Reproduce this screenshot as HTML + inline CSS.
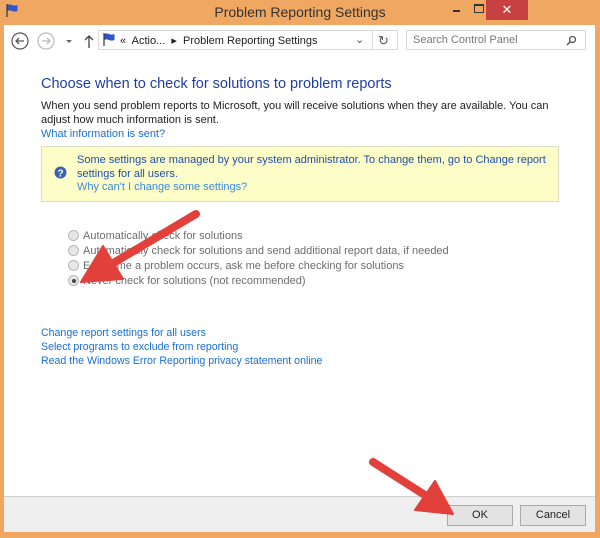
<!DOCTYPE html>
<html><head><style>
*{margin:0;padding:0;box-sizing:border-box}
body{width:600px;height:538px;overflow:hidden;background:#efa762;font-family:"Liberation Sans",sans-serif;position:relative}
.abs{position:absolute}
.t{font-size:11px;color:#1e1e1e;white-space:nowrap}
.l{color:#1a6fd1}
.radio{position:absolute;width:11px;height:11px;border:1px solid #b8b8b8;border-radius:50%;background:#e6e6e6}
</style></head><body>
<div class="abs" style="left:0;top:0;width:600px;height:25px;background:#efa762"></div>
<svg class="abs" style="left:5px;top:3px" width="14" height="14"><path d="M2 1v13" stroke="#333" stroke-width="1.2"/><path d="M2.5 2c3-2 5 2 10 0v6c-5 2-7-2-10 0z" fill="#2f55c8"/></svg>
<div class="abs" style="left:0;top:4px;width:600px;text-align:center;font-size:14px;color:#333">Problem Reporting Settings</div>
<div class="abs" style="left:453px;top:10px;width:7px;height:2px;background:#333"></div>
<div class="abs" style="left:474px;top:4px;width:10px;height:9px;border:1px solid #333;border-top-width:2px"></div>
<div class="abs" style="left:486px;top:0;width:42px;height:20px;background:#c74042;color:#fff;font-size:13px;text-align:center;line-height:20px">✕</div>
<div class="abs" style="left:4px;top:25px;width:591px;height:507px;background:#fff"></div>
<svg class="abs" style="left:10px;top:31px" width="90" height="20"><circle cx="10" cy="10" r="8" fill="none" stroke="#555" stroke-width="1.2"/><path d="M14 10H6M9 7l-3 3 3 3" fill="none" stroke="#555" stroke-width="1.3"/><circle cx="36" cy="10" r="8" fill="none" stroke="#bbb" stroke-width="1.2"/><path d="M32 10h8M37 7l3 3-3 3" fill="none" stroke="#bbb" stroke-width="1.3"/><path d="M56 9l3 3 3-3z" fill="#666"/><path d="M79 17V5M75 9l4-4 4 4" fill="none" stroke="#444" stroke-width="1.3"/></svg>
<div class="abs" style="left:98px;top:30px;width:300px;height:20px;border:1px solid #d9d9d9"></div>
<svg class="abs" style="left:102px;top:32px" width="14" height="14"><path d="M2 1v13" stroke="#333" stroke-width="1.2"/><path d="M2.5 2c3-2 5 2 10 0v6c-5 2-7-2-10 0z" fill="#2f55c8"/></svg>
<div class="abs t" style="left:120px;top:34px">«&nbsp; Actio... &nbsp;▸ &nbsp;Problem Reporting Settings</div>
<div class="abs t" style="left:355px;top:33px;color:#555">⌄</div>
<div class="abs" style="left:372px;top:30px;width:1px;height:20px;background:#d9d9d9"></div>
<div class="abs t" style="left:378px;top:33px;color:#555;font-size:13px">↻</div>
<div class="abs" style="left:406px;top:30px;width:180px;height:20px;border:1px solid #d9d9d9"></div>
<div class="abs t" style="left:413px;top:34px;color:#777">Search Control Panel</div>
<svg class="abs" style="left:566px;top:35px" width="11" height="11"><circle cx="6.5" cy="4.5" r="3" fill="none" stroke="#555" stroke-width="1.3"/><path d="M4.5 6.5L1 10" stroke="#555" stroke-width="1.5"/></svg>
<div class="abs" style="left:41px;top:76px;font-size:14.5px;color:#1f3f9f;white-space:nowrap">Choose when to check for solutions to problem reports</div>
<div class="abs t" style="left:41px;top:99px;line-height:14px">When you send problem reports to Microsoft, you will receive solutions when they are available. You can<br>adjust how much information is sent.<br><span class="l">What information is sent?</span></div>
<div class="abs" style="left:41px;top:146px;width:518px;height:56px;background:#fdfdc8;border:1px solid #dcdcc0"></div>
<svg class="abs" style="left:54px;top:166px" width="13" height="13"><circle cx="6.5" cy="6.5" r="6" fill="#3a63b0"/><text x="6.5" y="10.5" font-size="10" font-weight="bold" fill="#fff" text-anchor="middle" font-family="Liberation Sans">?</text></svg>
<div class="abs t" style="left:77px;top:154px;line-height:13.5px;color:#1f4fa8">Some settings are managed by your system administrator. To change them, go to Change report<br>settings for all users.<br><span class="l" style="color:#3a8be0">Why can't I change some settings?</span></div>
<div class="radio" style="left:68px;top:230px"></div>
<div class="radio" style="left:68px;top:245px"></div>
<div class="radio" style="left:68px;top:260px"></div>
<div class="radio" style="left:68px;top:275px"><div style="position:absolute;left:2.5px;top:2.5px;width:4px;height:4px;border-radius:50%;background:#444"></div></div>
<div class="abs t" style="left:83px;top:229px;line-height:15px;color:#6d6d6d">Automatically check for solutions<br>Automatically check for solutions and send additional report data, if needed<br>Each time a problem occurs, ask me before checking for solutions<br>Never check for solutions (not recommended)</div>
<div class="abs t l" style="left:41px;top:326px;line-height:14px;font-size:10.6px">Change report settings for all users<br>Select programs to exclude from reporting<br>Read the Windows Error Reporting privacy statement online</div>
<div class="abs" style="left:4px;top:496px;width:591px;height:36px;background:#efefef;border-top:1px solid #d0d0d0"></div>
<div class="abs t" style="left:447px;top:505px;width:66px;height:21px;border:1px solid #aaa;background:#e3e3e3;text-align:center;line-height:19px;color:#222">OK</div>
<div class="abs t" style="left:520px;top:505px;width:66px;height:21px;border:1px solid #aaa;background:#e3e3e3;text-align:center;line-height:19px;color:#222">Cancel</div>
<svg class="abs" style="left:0;top:0" width="600" height="538">
<g fill="#e2403a" stroke="#e2403a" stroke-linecap="round">
<line x1="196" y1="214" x2="110" y2="265" stroke-width="8"/>
<polygon points="81,282 123,279 103,246" stroke-width="2" stroke-linejoin="round"/>
<line x1="373" y1="462" x2="428" y2="497" stroke-width="8"/>
<polygon points="453,514 415,510 435,481" stroke-width="2" stroke-linejoin="round"/>
</g></svg>
</body></html>
